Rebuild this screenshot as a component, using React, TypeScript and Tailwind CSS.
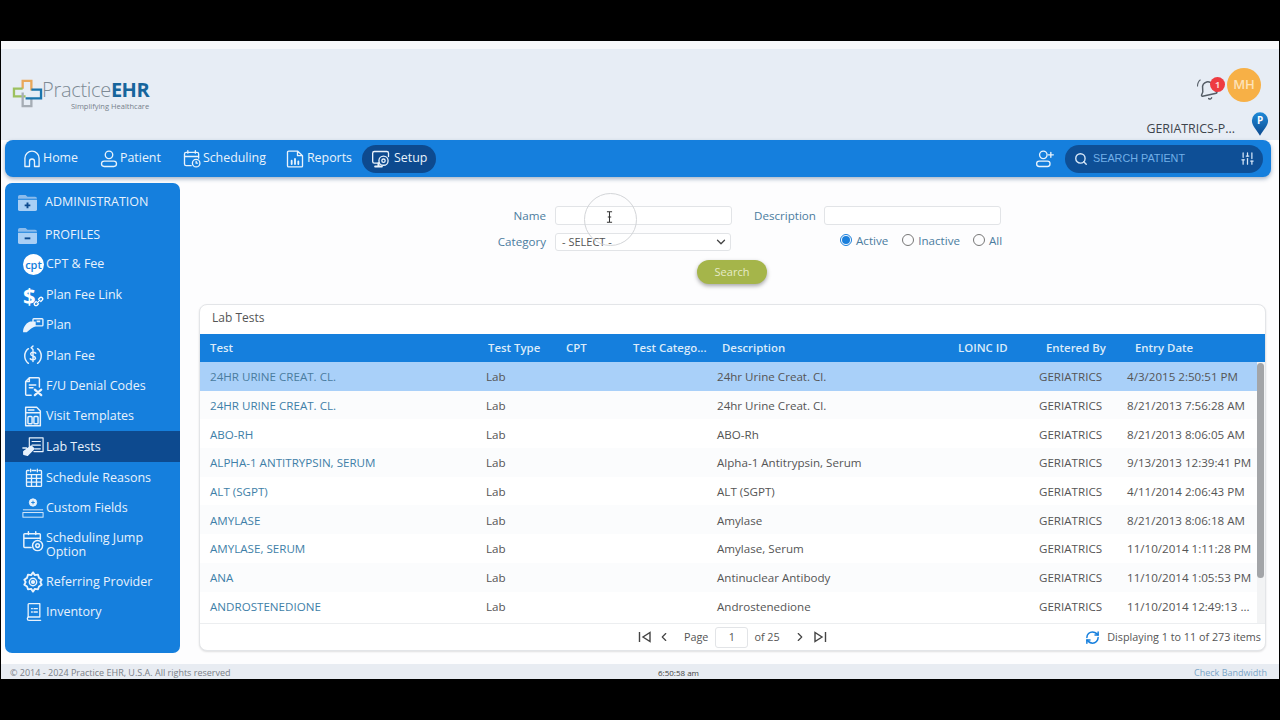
import { ReactNode } from "react";
import { Bell, ChevronDown, ChevronLeft, ChevronRight, RefreshCw, Search, SlidersVertical } from "lucide-react";

const stroke = {
  fill: "none",
  stroke: "currentColor",
  strokeWidth: 1.6,
  strokeLinecap: "round" as const,
  strokeLinejoin: "round" as const,
};

function Icon({ className, children }: { className?: string; children: ReactNode }) {
  return (
    <svg viewBox="0 0 24 24" className={className} {...stroke}>
      {children}
    </svg>
  );
}

function Logo() {
  return (
    <svg viewBox="0 0 32 30" className="h-[29px] w-[31px] shrink-0" fill="none" strokeWidth="2.4">
      <path d="M11 10V2h9v10" stroke="#e9a85a" />
      <path d="M11 10H2v8h12" stroke="#9dc15f" />
      <path d="M11 14v14h9v-8" stroke="#a6adb5" />
      <path d="M14 20h16v-9H20" stroke="#1b75ad" />
    </svg>
  );
}

function Pin() {
  return (
    <svg viewBox="0 0 20 28" className="h-[26px] w-[18px]">
      <defs>
        <linearGradient id="pin" x1="0" y1="0" x2="0" y2="1">
          <stop offset="0" stopColor="#1f8ad8" />
          <stop offset="1" stopColor="#0d4a8f" />
        </linearGradient>
      </defs>
      <path d="M10 27C6 20 1 16 1 10a9 9 0 0 1 18 0c0 6-5 10-9 17z" fill="url(#pin)" />
      <text x="10" y="14" textAnchor="middle" fontSize="11" fontWeight="700" fill="#fff" fontFamily="Open Sans">
        P
      </text>
    </svg>
  );
}

const navItems: { label: string; icon: ReactNode; gap: string; inner: string }[] = [
  {
    label: "Home",
    gap: "mr-[21px]",
    inner: "gap-[1px]",
    icon: (
      <Icon className="h-[20px] w-[20px]">
        <path d="M3.5 21V11a8.5 8.5 0 0 1 17 0v10h-5.5v-6a3 3 0 0 0-6 0v6z" />
      </Icon>
    ),
  },
  {
    label: "Patient",
    gap: "mr-[21px]",
    inner: "gap-[1px]",
    icon: (
      <Icon className="h-[20px] w-[20px]">
        <circle cx="12" cy="7" r="4.5" />
        <rect x="3" y="14.5" width="18" height="6.5" rx="3.2" />
      </Icon>
    ),
  },
  {
    label: "Scheduling",
    gap: "mr-[19px]",
    inner: "gap-[1px]",
    icon: (
      <Icon className="h-[20px] w-[20px]">
        <path d="M11 20H5a2 2 0 0 1-2-2V6a2 2 0 0 1 2-2h13a2 2 0 0 1 2 2v5M3 9h17M7 2v3M16 2v3" />
        <circle cx="17" cy="17" r="4.5" />
        <path d="M17 15v2h1.5" />
      </Icon>
    ),
  },
  {
    label: "Reports",
    gap: "mr-[10px]",
    inner: "gap-[2px]",
    icon: (
      <Icon className="h-[20px] w-[20px]">
        <path d="M3 4a1.5 1.5 0 0 1 1.5-1.5H15L21 8v12.5a1 1 0 0 1-1 1H4.5a1.5 1.5 0 0 1-1.5-1.5zM15 3v5h6" />
        <path d="M8 18v-4M12 18v-6M16 18v-3" strokeWidth="2.2" />
      </Icon>
    ),
  },
];

const sideItems: { label: string[]; h: string; icon: ReactNode; active?: boolean }[] = [
  {
    label: ["CPT & Fee"],
    h: "h-[30px]",
    icon: (
      <span className="flex h-[21px] w-[21px] items-center justify-center rounded-full bg-white text-[11px] leading-none font-semibold text-[#157fdd]">
        cpt
      </span>
    ),
  },
  {
    label: ["Plan Fee Link"],
    h: "h-[31px]",
    icon: (
      <span className="relative flex h-[24px] w-[21px] items-center text-[22px] leading-none font-bold text-white">
        $
        <Icon className="absolute right-0 bottom-0 h-[11px] w-[11px]">
          <path d="M9 15l6-6M7 12l-3 3a3.5 3.5 0 0 0 5 5l3-3M17 12l3-3a3.5 3.5 0 0 0-5-5l-3 3" strokeWidth="3" />
        </Icon>
      </span>
    ),
  },
  {
    label: ["Plan"],
    h: "h-[30px]",
    icon: (
      <svg viewBox="0 0 24 20" className="h-[18px] w-[22px]">
        <path d="M1 16c1-5 4-9 8-10h6v5l-5 3-5 4H1z" fill="#e8f2fc" />
        <rect x="12" y="3" width="11" height="8" rx="1" fill="none" stroke="#e8f2fc" strokeWidth="1.5" />
        <rect x="16" y="5" width="4" height="2" fill="#e8f2fc" />
      </svg>
    ),
  },
  {
    label: ["Plan Fee"],
    h: "h-[31px]",
    icon: (
      <Icon className="h-[22px] w-[22px]">
        <path d="M7 4a10 10 0 0 0 0 16M17 4a10 10 0 0 1 0 16" />
        <path d="M15 9c-1-1.5-5-1.8-5.5.5C9 12 15 12 14.7 14.5 14.3 16.5 10 16.5 9 15M12 6v12M12 1l-2 2 2 2" />
      </Icon>
    ),
  },
  {
    label: ["F/U Denial Codes"],
    h: "h-[30px]",
    icon: (
      <Icon className="h-[22px] w-[22px]">
        <path d="M10 22H5a1 1 0 0 1-1-1V7l4-4h10a1 1 0 0 1 1 1v9M8 3v4H4M8 11h7M8 14h4" />
        <path d="M14 16l7 6M21 16l-7 6" strokeWidth="2.4" />
      </Icon>
    ),
  },
  {
    label: ["Visit Templates"],
    h: "h-[30px]",
    icon: (
      <Icon className="h-[23px] w-[22px]">
        <path d="M4 2h12l4 4v16H4zM4 8h16M7 5h6" />
        <rect x="6.5" y="12" width="4.5" height="8" rx="1" />
        <rect x="13" y="12" width="4.5" height="8" rx="1" />
      </Icon>
    ),
  },
  {
    label: ["Lab Tests"],
    h: "h-[31px]",
    active: true,
    icon: (
      <Icon className="h-[22px] w-[22px]">
        <path d="M8 15V2h15v15H13M11 6h9M11 10h9M14 14h6" strokeWidth="1.3" />
        <path d="M2 17l8-6 3 3-7 7-4-1zM1 13h4" fill="currentColor" />
      </Icon>
    ),
  },
  {
    label: ["Schedule Reasons"],
    h: "h-[31px]",
    icon: (
      <Icon className="h-[24px] w-[20px]">
        <path d="M6 3H4a1 1 0 0 0-1 1v17a1 1 0 0 0 1 1h16a1 1 0 0 0 1-1V4a1 1 0 0 0-1-1h-2M10 3h4M8 1.5v3M16 1.5v3M3 8h18M3 12.5h18M3 17h18M9 8v14M15 8v14" />
      </Icon>
    ),
  },
  {
    label: ["Custom Fields"],
    h: "h-[30px]",
    icon: (
      <svg viewBox="0 0 24 24" className="h-[24px] w-[22px]" fill="none" stroke="#e8f2fc">
        <circle cx="12" cy="6" r="4" fill="#e8f2fc" />
        <path d="M12 4v4M10 6h4" stroke="#157fdd" />
        <path d="M1 14h22" />
        <rect x="1" y="17" width="22" height="5" />
      </svg>
    ),
  },
  {
    label: ["Scheduling Jump", "Option"],
    h: "h-[44px]",
    icon: (
      <Icon className="mb-[8px] h-[22px] w-[22px]">
        <path d="M10 19H3a1 1 0 0 1-1-1V5a1 1 0 0 1 1-1h16a1 1 0 0 1 1 1v5M2 9h18M7 2v3M15 2v3" />
        <circle cx="17" cy="17" r="5.5" />
        <circle cx="17" cy="17" r="2" />
      </Icon>
    ),
  },
  {
    label: ["Referring Provider"],
    h: "h-[30px]",
    icon: (
      <Icon className="h-[22px] w-[22px]">
        <path d="M12 1.5l2 3 3.5-.5 1 3.5 3 2-1.5 2.5 1.5 3-3 2-1 3-3.5-.5-2 3-2-3-3.5.5-1-3-3-2 1.5-3-1.5-2.5 3-2 1-3.5 3.5.5z" strokeWidth="2" />
        <circle cx="12" cy="12" r="4" />
        <circle cx="12" cy="12" r="1.5" fill="currentColor" />
      </Icon>
    ),
  },
  {
    label: ["Inventory"],
    h: "h-[30px]",
    icon: (
      <Icon className="h-[22px] w-[20px]">
        <path d="M5 18V3a1 1 0 0 1 1-1h13v16H6a2 2 0 0 0 0 4h14M9 8h1M12 8h4M9 12h1M12 12h4" />
      </Icon>
    ),
  },
];

const rows = [
  ["24HR URINE CREAT. CL.", "24hr Urine Creat. Cl.", "4/3/2015 2:50:51 PM"],
  ["24HR URINE CREAT. CL.", "24hr Urine Creat. Cl.", "8/21/2013 7:56:28 AM"],
  ["ABO-RH", "ABO-Rh", "8/21/2013 8:06:05 AM"],
  ["ALPHA-1 ANTITRYPSIN, SERUM", "Alpha-1 Antitrypsin, Serum", "9/13/2013 12:39:41 PM"],
  ["ALT (SGPT)", "ALT (SGPT)", "4/11/2014 2:06:43 PM"],
  ["AMYLASE", "Amylase", "8/21/2013 8:06:18 AM"],
  ["AMYLASE, SERUM", "Amylase, Serum", "11/10/2014 1:11:28 PM"],
  ["ANA", "Antinuclear Antibody", "11/10/2014 1:05:53 PM"],
  ["ANDROSTENEDIONE", "Androstenedione", "11/10/2014 12:49:13 ..."],
];

const gridCols = "grid grid-cols-[280px_76px_69px_85px_240px_82px_88px_1fr]";

function Radio({ label, checked, className }: { label: string; checked?: boolean; className?: string }) {
  return (
    <span className={`flex items-center gap-[4px] ${className ?? ""}`}>
      <span
        className={`flex h-[12px] w-[12px] items-center justify-center rounded-full border ${
          checked ? "border-[#1a7fdc]" : "border-[#777]"
        }`}
      >
        {checked && <span className="h-[8px] w-[8px] rounded-full bg-[#1a7fdc]" />}
      </span>
      {label}
    </span>
  );
}

export default function App() {
  return (
    <div className="flex h-[720px] w-[1280px] flex-col overflow-hidden bg-black px-px pt-[41px] pb-[41px] font-['Open_Sans',sans-serif] text-[11.6px] text-[#555]">
      <div className="flex h-[638px] flex-col bg-[#fdfdfe]">
        {/* Header */}
        <div className="flex h-[99px] shrink-0 justify-between border-t-[8px] border-[#f8f9fb] bg-[#e7edf5] pr-[10px] pl-[11px]">
          <div className="mt-[30px] flex items-start">
            <Logo />
            <div className="-ml-[1px] flex flex-col items-end">
              <div className="text-[20px] leading-[22px] font-light tracking-[-0.3px] text-[#7d8a94]">
                Practice<span className="font-bold tracking-[-0.5px] text-[#17659c]">EHR</span>
              </div>
              <div className="mt-[1px] text-[7.5px] leading-[9px] text-[#77828c]">Simplifying Healthcare</div>
            </div>
          </div>
          <div className="flex flex-col items-end">
            <div className="mt-[19px] mr-[8px] flex items-center">
              <div className="relative mr-[2px] h-[34px] w-[32px]">
                <svg viewBox="0 0 8 12" className="absolute top-[11px] left-[3px] h-[9px] w-[6px]" fill="none" stroke="#555d66" strokeWidth="1.4">
                  <path d="M6 1C3 3 2 6 2 10" />
                </svg>
                <Bell size={21} strokeWidth={1.7} className="absolute top-[12px] left-[5px] -rotate-12 text-[#555d66]" />
                <span className="absolute top-[9px] right-0 flex h-[15px] w-[15px] items-center justify-center rounded-full bg-[#ee3b41] text-[9px] font-bold text-[#fbd5d5]">
                  1
                </span>
              </div>
              <div className="flex h-[34px] w-[34px] items-center justify-center rounded-full bg-[#f7b046] text-[13px] font-semibold text-[#fde3b8]">
                MH
              </div>
            </div>
            <div className="mt-[8px] flex items-center">
              <span className="mt-[10px] text-[12.4px] font-medium text-[#3d444c]">GERIATRICS-P...</span>
              <span className="ml-[16px]">
                <Pin />
              </span>
            </div>
          </div>
        </div>

        {/* Nav */}
        <div className="mr-[8px] ml-[4px] flex h-[37px] shrink-0 items-center justify-between rounded-[8px] bg-[#157fdd] pr-[8px] pl-[17px] text-[12.4px] font-medium text-[#e9f3fc] shadow-[0_2px_4px_rgba(60,90,130,0.45)]">
          <div className="flex items-center">
            {navItems.map((item) => (
              <div key={item.label} className={`flex items-center ${item.inner} ${item.gap}`}>
                {item.icon}
                {item.label}
              </div>
            ))}
            <div className="flex h-[28px] w-[74px] items-center gap-[3px] rounded-full bg-[#0d4a8f] pl-[9px]">
              <Icon className="h-[20px] w-[20px]">
                <path d="M10 17H4a2 2 0 0 1-2-2V5a2 2 0 0 1 2-2h15a2 2 0 0 1 2 2v4" />
                <circle cx="15" cy="14" r="5.5" />
                <circle cx="15" cy="14" r="2" />
                <path d="M5 21h8M9 17v4" strokeWidth="2.5" />
              </Icon>
              Setup
            </div>
          </div>
          <div className="flex items-center">
            <Icon className="mr-[10px] h-[20px] w-[20px]">
              <circle cx="10" cy="7" r="4.5" />
              <rect x="2" y="14.5" width="16" height="6.5" rx="3" />
              <path d="M19 4v6M16 7h6" />
            </Icon>
            <div className="flex h-[28px] w-[198px] items-center rounded-full bg-[#0e4f96] pr-[8px] pl-[9px]">
              <Search size={14} strokeWidth={2.4} className="text-[#d5e6f7]" />
              <span className="ml-[5px] flex-1 font-['Liberation_Sans',sans-serif] text-[10.8px] font-normal text-[#72afe8]">
                SEARCH PATIENT
              </span>
              <SlidersVertical size={15} className="text-[#d5e6f7]" />
            </div>
          </div>
        </div>

        <div className="flex min-h-0 flex-1 pt-[6px] pr-[13px] pl-[4px]">
          {/* Sidebar */}
          <div className="h-[470px] w-[175px] shrink-0 rounded-[7px] bg-[#157fdd] pt-[3px] text-[12.5px] font-medium text-[#e8f2fc]">
            <div className="flex h-[33px] items-center gap-[7px] pl-[12px]">
              <svg viewBox="0 0 22 20" className="h-[19px] w-[21px]">
                <path d="M1 4a2 2 0 0 1 2-2h6l2 2h8a2 2 0 0 1 2 2H1z" fill="#8cbcec" />
                <path d="M1 7h20v10a2 2 0 0 1-2 2H3a2 2 0 0 1-2-2z" fill="#a9cff5" />
                <path d="M11 10v6M8 13h6" stroke="#0d4a8f" strokeWidth="2" />
              </svg>
              ADMINISTRATION
            </div>
            <div className="flex h-[30px] items-center gap-[7px] pt-[2px] pl-[12px]">
              <svg viewBox="0 0 22 20" className="h-[19px] w-[21px]">
                <path d="M1 4a2 2 0 0 1 2-2h6l2 2h8a2 2 0 0 1 2 2H1z" fill="#8cbcec" />
                <path d="M1 7h20v10a2 2 0 0 1-2 2H3a2 2 0 0 1-2-2z" fill="#a9cff5" />
                <path d="M8 13h6" stroke="#0d4a8f" strokeWidth="2" />
              </svg>
              PROFILES
            </div>
            {sideItems.map((item) => (
              <div
                key={item.label[0]}
                className={`flex items-center ${item.h} ${item.active ? "bg-[#0d4a8f]" : ""}`}
              >
                <span className="flex w-[41px] shrink-0 justify-end pr-[2px]">{item.icon}</span>
                <span className="leading-[14px]">
                  {item.label.map((line) => (
                    <span key={line} className="block">
                      {line}
                    </span>
                  ))}
                </span>
              </div>
            ))}
          </div>

          {/* Content */}
          <div className="relative ml-[19px] min-w-0 flex-1 text-[#4b7c9e]">
            <div className="mt-[23px] flex h-[19px] items-center">
              <span className="w-[347px] text-right">Name</span>
              <span className="ml-[9px] h-[19px] w-[177px] rounded-[3px] border border-[#e2e4e7] bg-white" />
              <span className="ml-[22px] w-[62px]">Description</span>
              <span className="ml-[8px] h-[19px] w-[177px] rounded-[3px] border border-[#e2e4e7] bg-white" />
            </div>
            <div className="mt-[8px] flex h-[18px] items-center">
              <span className="w-[347px] text-right">Category</span>
              <span className="ml-[9px] flex h-[18px] w-[176px] items-center justify-between rounded-[3px] border border-[#e2e4e7] bg-white pr-[2px] pl-[6px] text-[11px] text-[#555]">
                - SELECT -
                <ChevronDown size={14} strokeWidth={2.2} className="text-[#444]" />
              </span>
              <span className="-mt-[3px] ml-[109px] flex">
                <Radio label="Active" checked />
                <Radio label="Inactive" className="ml-[14px]" />
                <Radio label="All" className="ml-[13px]" />
              </span>
            </div>
            <div className="mt-[9px] ml-[498px] flex h-[24px] w-[70px] items-center justify-center rounded-full bg-[#a5b54a] text-[11px] text-[#e6ebc8] shadow-[0_2px_4px_rgba(0,0,0,0.35)]">
              Search
            </div>

            {/* Card */}
            <div className="mt-[20px] h-[347px] overflow-hidden rounded-[8px] border border-[#e3e5e8] bg-white shadow-[0_1px_2px_rgba(0,0,0,0.12)]">
              <div className="flex h-[29px] items-center pb-[4px] pl-[12px] text-[12px] text-[#555]">Lab Tests</div>
              <div className={`${gridCols} h-[28px] items-center bg-[#157fdd] pb-[1px] text-[11.4px] font-semibold text-[#dcebf9]`}>
                <span className="pl-[10px]">Test</span>
                <span className="pl-[8px]">Test Type</span>
                <span className="pl-[10px]">CPT</span>
                <span className="whitespace-nowrap pl-[8px]">Test Catego...</span>
                <span className="pl-[12px]">Description</span>
                <span className="pl-[8px]">LOINC ID</span>
                <span className="pl-[14px]">Entered By</span>
                <span className="pl-[15px]">Entry Date</span>
              </div>
              <div className="relative h-[261px]">
                {rows.map((row, i) => (
                  <div
                    key={i}
                    className={`${gridCols} h-[28.7px] items-center pt-[1px] whitespace-nowrap ${
                      i === 0 ? "bg-[#a9d0f9]" : i % 2 === 0 ? "bg-white" : "bg-[#fbfcfd]"
                    }`}
                  >
                    <span className={`pl-[10px] ${i === 0 ? "text-[#4a7c9f]" : "text-[#3f7fa8]"}`}>{row[0]}</span>
                    <span className="pl-[6px] text-[#555]">Lab</span>
                    <span />
                    <span />
                    <span className="pl-[7px] text-[#555]">{row[1]}</span>
                    <span />
                    <span className="pl-[7px] text-[#555]">GERIATRICS</span>
                    <span className="pl-[7px] text-[#555]">{row[2]}</span>
                  </div>
                ))}
                <div className="absolute top-0 right-0 bottom-0 w-[8px] bg-[#f2f3f4]" />
                <div className="absolute top-[1px] right-[1px] h-[215px] w-[7px] rounded-full bg-[#a3a5a8]" />
              </div>
              <div className="flex h-[27px] items-center border-t border-[#eceef0] pr-[4px] text-[10.8px] text-[#555]">
                <div className="ml-[438px] flex items-center">
                  <svg viewBox="0 0 14 12" className="h-[12px] w-[14px]" fill="none" stroke="#444" strokeWidth="1.4">
                    <path d="M1.5 1v10M12 1.5v9L5 6z" />
                  </svg>
                  <ChevronLeft size={14} className="ml-[5px] text-[#444]" />
                  <span className="ml-[13px]">Page</span>
                  <span className="ml-[7px] flex h-[21px] w-[33px] items-center justify-center rounded-[3px] border border-[#e2e4e7]">
                    1
                  </span>
                  <span className="ml-[6px]">of 25</span>
                  <ChevronRight size={14} className="ml-[13px] text-[#444]" />
                  <svg viewBox="0 0 14 12" className="ml-[6px] h-[12px] w-[14px]" fill="none" stroke="#444" strokeWidth="1.4">
                    <path d="M12.5 1v10M2 1.5v9L9 6z" />
                  </svg>
                </div>
                <div className="ml-auto flex items-center gap-[7px]">
                  <RefreshCw size={15} strokeWidth={2.4} className="text-[#157fdd]" />
                  Displaying 1 to 11 of 273 items
                </div>
              </div>
            </div>

            {/* Text cursor with click highlight, over the form */}
            <div className="absolute top-[10px] left-[385px] flex h-[53px] w-[53px] items-center justify-center rounded-full border border-[#d3d5d8] pb-[5px]">
              <svg viewBox="0 0 8 14" className="-ml-[3px] h-[12px] w-[7px]" fill="none" stroke="#333" strokeWidth="1.2">
                <path d="M1 1h6M1 13h6M4 1v12M2 7h4" />
              </svg>
            </div>
          </div>
        </div>

        {/* Footer */}
        <div className="flex h-[15px] shrink-0 items-center bg-[#e8ecf2] pt-[3px] pr-[12px] pl-[9px] text-[9px] text-[#7a8088]">
          <span className="w-[648px]">© 2014 - 2024 Practice EHR, U.S.A. All rights reserved</span>
          <span className="text-[8px] text-[#444]">6:50:58 am</span>
          <span className="flex-1 text-right text-[#7aa5c8]">Check Bandwidth</span>
        </div>
      </div>
    </div>
  );
}
